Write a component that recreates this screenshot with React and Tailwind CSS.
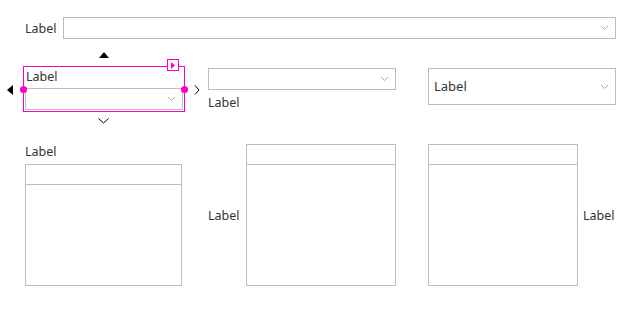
import React from "react";

const Chevron = ({ className = "" }) => (
  <svg width="9" height="6" viewBox="0 0 9 6" className={className}>
    <path d="M1 1 L4.5 4.5 L8 1" fill="none" stroke="currentColor" strokeWidth="1" />
  </svg>
);

// combo box with a small grey chevron on the right
const Select = ({ className = "", children }) => (
  <div className={`flex items-center justify-between border border-[#bcbcbc] bg-white pr-[6px] ${className}`}>
    <span className="pl-[5px] text-[13px] text-[#333]">{children}</span>
    <Chevron className="text-[#a8a8a8]" />
  </div>
);

// list box: header row plus empty body
const ListBox = ({ className = "" }) => (
  <div className={`flex flex-col border border-[#bcbcbc] bg-white ${className}`}>
    <div className="h-[20px] border-b border-[#bcbcbc]" />
    <div className="flex-1" />
  </div>
);

const Label = ({ className = "" }) => (
  <span className={`h-[13px] text-[12.5px] leading-[13px] text-[#333] ${className}`}>Label</span>
);

const Handle = ({ className }) => (
  <span className={`absolute h-[7px] w-[7px] rounded-full bg-[#ff00bf] ${className}`} />
);

export default function App() {
  return (
    <div
      className="h-[309px] w-[637px] overflow-hidden bg-white"
      style={{ fontFamily: "'Noto Sans', 'Open Sans', sans-serif" }}
    >
      {/* row 1 */}
      <div className="flex items-center pl-[25px] pr-[21px] pt-[17px]">
        <Label className="w-[38px]" />
        <Select className="h-[22px] flex-1" />
      </div>

      {/* row 2 */}
      <div className="mt-[27px] flex items-start">
        {/* selected control */}
        <div className="relative ml-[23px] h-[46px] w-[162px] border border-[#ff00bf] pl-[1px] pr-[1px]">
          <Label className="mt-[3px] block pl-[1px]" />
          <Select className="mt-[5px] h-[22px]" />
          <Handle className="left-[-4px] top-[19px]" />
          <Handle className="right-[-4px] top-[19px]" />
          <span className="absolute right-[5px] top-[-8px] flex h-[12px] w-[12px] items-center justify-center border border-[#ff00bf] bg-white">
            <svg width="4" height="7" viewBox="0 0 4 7">
              <path d="M0 0 L4 3.5 L0 7 Z" fill="#ff00bf" />
            </svg>
          </span>
          <svg className="absolute left-[75px] top-[-15px]" width="10" height="6" viewBox="0 0 10 6">
            <path d="M0 6 L5 0 L10 6 Z" fill="#000" />
          </svg>
          <svg className="absolute left-[-17px] top-[18px]" width="6" height="10" viewBox="0 0 6 10">
            <path d="M6 0 L0 5 L6 10 Z" fill="#000" />
          </svg>
          <svg className="absolute right-[-16px] top-[18px]" width="6" height="10" viewBox="0 0 6 10">
            <path d="M1 0.5 L5 5 L1 9.5" fill="none" stroke="#000" strokeWidth="1" />
          </svg>
          <svg className="absolute left-[74px] top-[51px]" width="11" height="6" viewBox="0 0 11 6">
            <path d="M0.5 0.5 L5.5 5 L10.5 0.5" fill="none" stroke="#000" strokeWidth="1" />
          </svg>
        </div>

        <div className="ml-[23px] mt-[2px] flex w-[188px] flex-col">
          <Select className="h-[22px]" />
          <Label className="mt-[6px]" />
        </div>

        <Select className="ml-[32px] mt-[2px] h-[37px] w-[188px]">Label</Select>
      </div>

      {/* row 3 */}
      <div className="mt-[32px] flex items-start">
        <div className="ml-[25px] flex flex-col">
          <Label className="mt-[1px]" />
          <ListBox className="mt-[6px] h-[122px] w-[157px]" />
        </div>
        <div className="ml-[26px] flex items-center">
          <Label className="w-[38px]" />
          <ListBox className="h-[142px] w-[150px]" />
        </div>
        <div className="ml-[32px] flex items-center">
          <ListBox className="h-[142px] w-[150px]" />
          <Label className="ml-[5px]" />
        </div>
      </div>
    </div>
  );
}
